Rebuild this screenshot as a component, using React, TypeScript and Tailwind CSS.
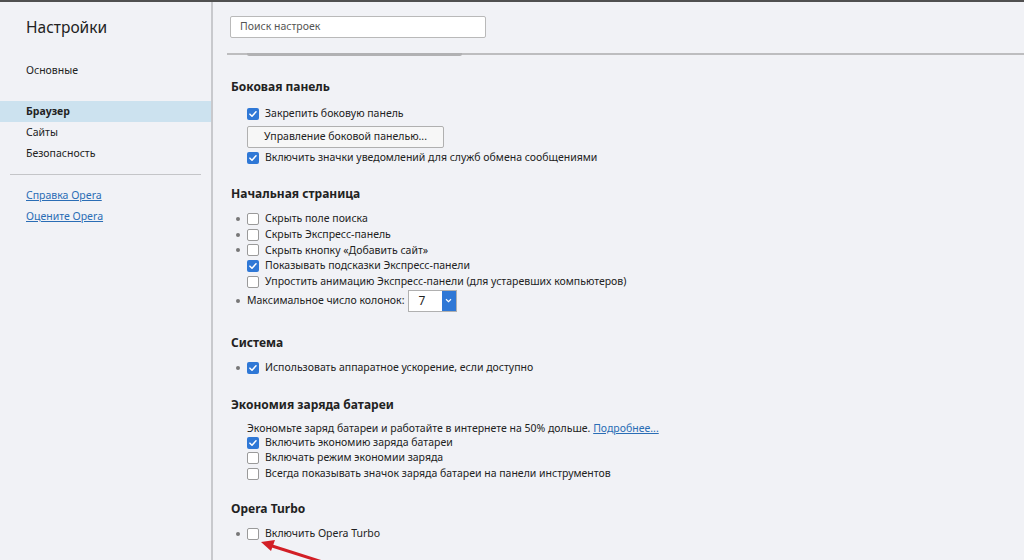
import React from "react";

const Check = ({ on }: { on?: boolean }) =>
  on ? (
    <span className="flex h-[12px] w-[12px] shrink-0 items-center justify-center rounded-[2px] bg-[#2f78d6]">
      <svg viewBox="0 0 12 12" className="h-[10px] w-[10px]">
        <path d="M2.3 6.2 L4.8 8.6 L9.6 3.4" fill="none" stroke="#fff" strokeWidth="1.8" strokeLinecap="round" strokeLinejoin="round" />
      </svg>
    </span>
  ) : (
    <span className="h-[12px] w-[12px] shrink-0 rounded-[2px] border border-[#9a9a9a] bg-white" />
  );

const Row = ({ on, dot, children, h = "h-[15.75px]" }: { on?: boolean; dot?: boolean; children: React.ReactNode; h?: string }) => (
  <div className={`relative flex items-center gap-[6px] pl-[16px] ${h}`}>
    {dot && <span className="absolute left-[5px] top-1/2 h-[4px] w-[4px] -translate-y-1/2 rounded-full bg-[#777]" />}
    <Check on={on} />
    <span>{children}</span>
  </div>
);

const Heading = ({ children, className = "" }: { children: React.ReactNode; className?: string }) => (
  <div className={`h-[16px] text-[12px] font-bold leading-[16px] text-[#222] ${className}`}>{children}</div>
);

export default function App() {
  return (
    <div className="relative h-[560px] w-[1024px] overflow-hidden border-t-2 border-[#505050] bg-[#f1f2f6] text-[10.5px] text-[#222]" style={{ fontFamily: '"Noto Sans", "Open Sans", sans-serif' }}>
      <div className="flex h-full">
        {/* sidebar */}
        <aside className="flex w-[213px] shrink-0 flex-col border-r-2 border-[#c8c9cd]">
          <div className="mt-[14px] pl-[26px] text-[15.5px] leading-[22px] text-[#222]">Настройки</div>
          <div className="mt-[24px] pl-[26px] leading-[16px]">Основные</div>
          <div className="mt-[23px] flex h-[21px] items-center bg-[#cce2ef] pl-[26px] font-bold">Браузер</div>
          <div className="flex h-[21px] items-center pl-[26px]">Сайты</div>
          <div className="flex h-[21px] items-center pl-[26px]">Безопасность</div>
          <div className="mx-[10px] mt-[10px] border-t border-[#c4c5c8]" />
          <div className="mt-[10px] flex h-[21px] items-center pl-[26px] text-[#2a6db5] underline">Справка Opera</div>
          <div className="flex h-[21px] items-center pl-[26px] text-[#2a6db5] underline">Оцените Opera</div>
        </aside>

        {/* main */}
        <main className="flex flex-1 flex-col">
          <div className="pl-[17px] pt-[14px]">
            <div className="flex h-[22px] w-[256px] items-center rounded-[2px] border border-[#b9b9b9] bg-white pl-[9px] text-[#555]">
              Поиск настроек
            </div>
          </div>
          <div className="relative mt-[15px] ml-[14px] h-[2px] bg-[#bdbdbf]">
            <div className="absolute left-[20px] top-0 h-[3px] w-[215px] rounded-b-[2px] bg-[#b1b1b3]" />
          </div>

          <div className="pl-[18px]">
            <Heading className="mt-[24px]">Боковая панель</Heading>
            <div className="mt-[10px]">
              <Row on h="h-[17px]">Закрепить боковую панель</Row>
              <div className="pl-[16px] pt-[4px]">
                <div className="flex h-[22px] w-[197px] items-center justify-center rounded-[2px] border border-[#b0b0b0] bg-[#f7f7f7]">
                  Управление боковой панелью...
                </div>
              </div>
              <Row on h="h-[20px]">Включить значки уведомлений для служб обмена сообщениями</Row>
            </div>

            <Heading className="mt-[18px]">Начальная страница</Heading>
            <div className="mt-[9px]">
              <Row dot>Скрыть поле поиска</Row>
              <Row dot>Скрыть Экспресс-панель</Row>
              <Row dot>Скрыть кнопку «Добавить сайт»</Row>
              <Row on>Показывать подсказки Экспресс-панели</Row>
              <Row>Упростить анимацию Экспресс-панели (для устаревших компьютеров)</Row>
              <div className="relative flex h-[22px] items-center pl-[16px]">
                <span className="absolute left-[5px] top-1/2 h-[4px] w-[4px] -translate-y-1/2 rounded-full bg-[#777]" />
                <span>Максимальное число колонок:</span>
                <div className="ml-[3px] flex h-[22px] w-[49px] border border-[#b0b0b0] bg-white">
                  <span className="flex flex-1 items-center pl-[10px] text-[12px]">7</span>
                  <span className="flex w-[14px] items-center justify-center bg-[#2f78d6]">
                    <svg viewBox="0 0 8 6" className="h-[5px] w-[7px]">
                      <path d="M1 1.5 L4 4.5 L7 1.5" fill="none" stroke="#fff" strokeWidth="1.4" />
                    </svg>
                  </span>
                </div>
              </div>
            </div>

            <Heading className="mt-[23px]">Система</Heading>
            <div className="mt-[9px]">
              <Row dot on h="h-[16px]">Использовать аппаратное ускорение, если доступно</Row>
            </div>

            <Heading className="mt-[21px]">Экономия заряда батареи</Heading>
            <div className="mt-[8px] pl-[16px] leading-[14px]">
              Экономьте заряд батареи и работайте в интернете на 50% дольше.{" "}
              <span className="text-[#2a6db5] underline">Подробнее...</span>
            </div>
            <div>
              <Row on h="h-[15.5px]">Включить экономию заряда батареи</Row>
              <Row h="h-[15.5px]">Включать режим экономии заряда</Row>
              <Row h="h-[15.5px]">Всегда показывать значок заряда батареи на панели инструментов</Row>
            </div>

            <Heading className="mt-[20px]">Opera Turbo</Heading>
            <div className="mt-[9px]">
              <Row dot h="h-[16px]">Включить Opera Turbo</Row>
            </div>
          </div>
        </main>
      </div>

      {/* red arrow */}
      <svg className="pointer-events-none absolute left-[255px] top-[535px] h-[30px] w-[90px]" viewBox="0 0 90 30">
        <line x1="80" y1="29" x2="14" y2="8" stroke="#d21f26" strokeWidth="3" />
        <path d="M6 5 L20 3 L16 14 Z" fill="#d21f26" />
      </svg>
    </div>
  );
}
